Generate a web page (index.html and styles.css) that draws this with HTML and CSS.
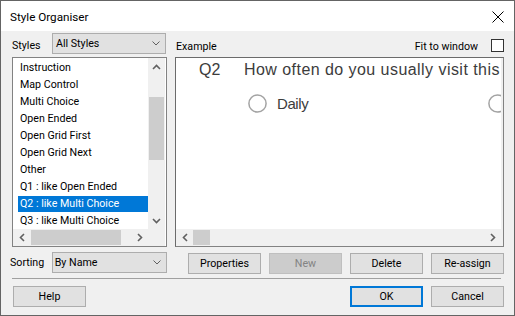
FILE: index.html
```html
<!DOCTYPE html>
<html>
<head>
<meta charset="utf-8">
<title>Style Organiser</title>
<link rel="stylesheet" href="styles.css">
</head>
<body>
<div class="window">
  <div class="titlebar">
    <span class="title">Style Organiser</span>
    <svg class="close" width="12" height="12" viewBox="0 0 12 12"><path d="M0.5 0.5L11.5 11.5M11.5 0.5L0.5 11.5" stroke="#000" stroke-width="1" fill="none"/></svg>
  </div>
  <div class="client">
    <div class="row row-top">
      <div class="col-left">
        <span class="lbl lbl-styles">Styles</span>
        <div class="combo combo-styles"><span>All Styles</span><svg class="chev" width="8" height="5" viewBox="0 0 8 5"><polyline points="0.5,0.5 4,4 7.5,0.5" fill="none" stroke="#606060" stroke-width="1"/></svg></div>
      </div>
      <div class="col-right">
        <span class="lbl lbl-example">Example</span>
        <span class="lbl lbl-fit">Fit to window</span>
        <span class="checkbox"></span>
      </div>
    </div>

    <div class="row row-main">
      <div class="listbox">
        <div class="list-body">
          <ul class="items">
            <li>Instruction</li>
            <li>Map Control</li>
            <li>Multi Choice</li>
            <li>Open Ended</li>
            <li>Open Grid First</li>
            <li>Open Grid Next</li>
            <li>Other</li>
            <li>Q1 : like Open Ended</li>
            <li class="selected">Q2 : like Multi Choice</li>
            <li>Q3 : like Multi Choice</li>
          </ul>
          <div class="vscroll">
            <div class="sb-btn"><svg width="9" height="6" viewBox="0 0 9 6"><polyline points="1,5 4.5,1.5 8,5" fill="none" stroke="#606060" stroke-width="1.6"/></svg></div>
            <div class="vtrack"><div class="vthumb"></div></div>
            <div class="sb-btn"><svg width="9" height="6" viewBox="0 0 9 6"><polyline points="1,1 4.5,4.5 8,1" fill="none" stroke="#606060" stroke-width="1.6"/></svg></div>
          </div>
        </div>
        <div class="hscroll-row">
          <div class="hscroll list-h">
            <div class="sb-btn"><svg width="6" height="9" viewBox="0 0 6 9"><polyline points="5,1 1.5,4.5 5,8" fill="none" stroke="#606060" stroke-width="1.6"/></svg></div>
            <div class="htrack"><div class="hthumb list-thumb"></div></div>
            <div class="sb-btn"><svg width="6" height="9" viewBox="0 0 6 9"><polyline points="1,1 4.5,4.5 1,8" fill="none" stroke="#606060" stroke-width="1.6"/></svg></div>
          </div>
          <div class="corner"></div>
        </div>
      </div>

      <div class="preview">
        <div class="preview-inner">
          <div class="canvas">
            <div class="q-row"><span class="q-num">Q2</span><span class="q-text">How often do you usually visit this</span></div>
            <div class="opt-row">
              <div class="opt">
                <svg class="radio" width="19" height="19" viewBox="0 0 19 19"><circle cx="9.5" cy="9.5" r="8.6" fill="#fff" stroke="#a3a3a3" stroke-width="1.5"/></svg>
                <span class="opt-text">Daily</span>
              </div>
              <div class="opt">
                <svg class="radio" width="19" height="19" viewBox="0 0 19 19"><circle cx="9.5" cy="9.5" r="8.6" fill="#fff" stroke="#a3a3a3" stroke-width="1.5"/></svg>
              </div>
            </div>
          </div>
          <div class="hscroll prev-h">
            <div class="sb-btn"><svg width="6" height="9" viewBox="0 0 6 9"><polyline points="5,1 1.5,4.5 5,8" fill="none" stroke="#606060" stroke-width="1.6"/></svg></div>
            <div class="htrack"><div class="hthumb prev-thumb"></div></div>
            <div class="sb-btn"><svg width="6" height="9" viewBox="0 0 6 9"><polyline points="1,1 4.5,4.5 1,8" fill="none" stroke="#606060" stroke-width="1.6"/></svg></div>
          </div>
        </div>
        <div class="strip"></div>
      </div>
    </div>

    <div class="row row-sort">
      <div class="col-left">
        <span class="lbl lbl-sorting">Sorting</span>
        <div class="combo combo-sort"><span>By Name</span><svg class="chev" width="8" height="5" viewBox="0 0 8 5"><polyline points="0.5,0.5 4,4 7.5,0.5" fill="none" stroke="#606060" stroke-width="1"/></svg></div>
      </div>
      <div class="col-right buttons">
        <button class="btn">Properties</button>
        <button class="btn btn-disabled">New</button>
        <button class="btn">Delete</button>
        <button class="btn">Re-assign</button>
      </div>
    </div>

    <div class="sep"></div>

    <div class="row row-footer">
      <button class="btn btn-help">Help</button>
      <div class="footer-right">
        <button class="btn btn-default">OK</button>
        <button class="btn">Cancel</button>
      </div>
    </div>
  </div>
</div>
</body>
</html>
```

FILE: styles.css
```css
* { box-sizing: border-box; }

body {
  margin: 0;
  background: #ffffff;
  font-family: Roboto, "Noto Sans", sans-serif;
  font-size: 10.67px;
  color: #000;
}

.window {
  width: 515px;
  height: 316px;
  border: 1px solid #646464;
  display: flex;
  flex-direction: column;
  background: #f0f0f0;
}

.titlebar {
  flex: none;
  height: 30px;
  background: #fff;
  display: flex;
  align-items: center;
  justify-content: space-between;
  padding: 1px 10px 0 9px;
}

.title { font-size: 11.7px; color: #000; }
.close { display: block; }

.client {
  flex: 1;
  padding: 2px 10px 0 11px;
  display: flex;
  flex-direction: column;
}

.row { display: flex; }

.col-left { width: 155px; display: flex; flex: none; }
.col-right { width: 329px; display: flex; flex: none; margin-left: 8px; }

.row-top { height: 21px; }

.lbl { line-height: 21px; white-space: nowrap; }
.lbl-styles { width: 40px; margin-top: 2px; }
.lbl-example { margin-left: 1px; margin-top: 3px; flex: 1; }
.lbl-fit { margin-top: 3px; margin-right: 13px; }
.lbl-sorting { width: 42px; margin-left: -2px; }

.checkbox {
  width: 13px;
  height: 13px;
  margin-top: 6px;
  border: 1px solid #333;
  background: #fff;
}

.combo {
  height: 21px;
  background: #e1e1e1;
  border: 1px solid #adadad;
  display: flex;
  align-items: center;
  justify-content: space-between;
  padding: 0 5px 0 3px;
  line-height: 19px;
}
.combo-styles { width: 114px; }
.combo-sort { width: 116px; padding-left: 2px; }
.chev { display: block; }

/* main row */
.row-main { height: 190px; margin-top: 3px; }

.listbox {
  width: 155px;
  height: 190px;
  flex: none;
  border: 1px solid #828282;
  background: #fff;
  display: flex;
  flex-direction: column;
}

.list-body { display: flex; height: 171px; }

.items {
  list-style: none;
  margin: 0;
  padding: 2px 0 0 5px;
  width: 135px;
  overflow: hidden;
}
.items li {
  height: 16px;
  margin-bottom: 1px;
  line-height: 15px;
  padding-left: 2px;
  white-space: nowrap;
}
.items li.selected { background: #0078d7; color: #fff; }

.vscroll {
  width: 17px;
  background: #f0f0f0;
  display: flex;
  flex-direction: column;
}
.sb-btn {
  width: 17px;
  height: 17px;
  flex: none;
  display: flex;
  align-items: center;
  justify-content: center;
}
.sb-btn svg { display: block; }
.vtrack { flex: 1; }
.vthumb {
  margin: 22px 0 0 1px;
  width: 15px;
  height: 63px;
  background: #cdcdcd;
}

.hscroll-row { display: flex; height: 17px; }
.hscroll { display: flex; height: 17px; background: #f0f0f0; }
.list-h { width: 135px; }
.corner { width: 17px; background: #f0f0f0; }
.htrack { flex: 1; }
.hthumb { height: 15px; margin-top: 1px; background: #cdcdcd; }
.list-thumb { width: 90px; margin-left: 1px; }
.prev-thumb { width: 17px; }

/* preview */
.preview {
  width: 329px;
  height: 190px;
  flex: none;
  margin-left: 8px;
  border: 1px solid #828282;
  border-top-color: #6b6b6b;
  border-left-color: #6b6b6b;
  display: flex;
  background: #f0f0f0;
}
.preview-inner { width: 325px; display: flex; flex-direction: column; }
.strip { width: 2px; background: #f0f0f0; }

.canvas {
  height: 171px;
  background: #fff;
  overflow: hidden;
  font-family: "Liberation Sans", Arial, sans-serif;
  color: #3c3c3c;
  padding-top: 3px;
}
.q-row { display: flex; height: 18px; line-height: 18px; font-size: 16px; white-space: nowrap; }
.q-num { width: 68px; padding-left: 23px; flex: none; }
.q-text { letter-spacing: 0.45px; }

.opt-row { display: flex; margin-top: 15px; padding-left: 72px; height: 19px; white-space: nowrap; }
.opt { width: 240px; flex: none; display: flex; align-items: center; }
.radio { display: block; flex: none; }
.opt-text { margin-left: 10px; font-size: 15px; line-height: 17px; letter-spacing: -0.4px; }

.prev-h { width: 325px; }

/* sort row */
.row-sort { height: 22px; margin-top: 5px; align-items: flex-start; }
.buttons { justify-content: flex-end; gap: 8px; padding-top: 1px; }

.btn {
  width: 73px;
  height: 21px;
  background: #e1e1e1;
  border: 1px solid #adadad;
  font-family: Roboto, "Noto Sans", sans-serif;
  font-size: 10.67px;
  color: #000;
  padding: 0;
  margin: 0;
  line-height: 19px;
}
.btn-disabled { background: #cccccc; border-color: #bfbfbf; color: #838383; }
.btn-default { border: 2px solid #0078d7; line-height: 17px; }

.sep { width: 489px; height: 1px; background: #a0a0a0; margin-top: 4px; flex: none; }

.row-footer { height: 21px; margin-top: 7px; justify-content: space-between; }
.btn-help { margin-left: 1px; }
.footer-right { display: flex; gap: 8px; }
```
